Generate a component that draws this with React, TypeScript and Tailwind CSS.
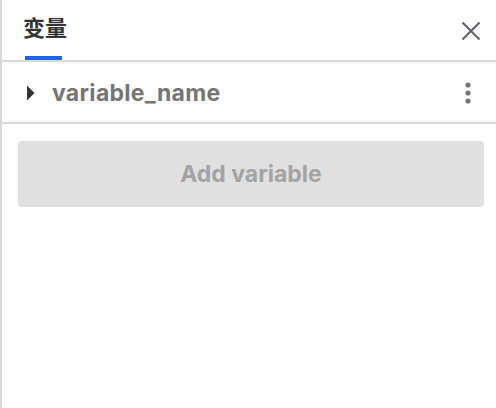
import React from "react";

export default function App() {
  return (
    <div
      className="w-[496px] h-[408px] bg-white border-l-2 border-[#d9d9d9] flex flex-col"
      style={{ fontFamily: "Inter, 'Noto Sans CJK SC', sans-serif" }}
    >
      <div className="h-[62px] shrink-0 border-b-2 border-[#d9d9d9] flex items-stretch justify-between pl-[21px] pr-[15px]">
        <div className="flex flex-col justify-between">
          <div className="pt-[17px] text-[22px] leading-[22px] font-bold text-[#333333]">变量</div>
          <div className="h-[4px] w-[37px] ml-[2px] bg-[#1a66e8]" />
        </div>
        <div className="flex items-start pt-[21px]">
          <svg width="20" height="20" viewBox="0 0 20 20" className="block">
            <path d="M1.5 1.5L18.5 18.5M18.5 1.5L1.5 18.5" stroke="#5f6068" strokeWidth="2" fill="none" />
          </svg>
        </div>
      </div>
      <div className="h-[62px] shrink-0 border-b-2 border-[#d9d9d9] flex items-center pt-[2px] pl-[25px] pr-[25px]">
        <svg width="8" height="16" viewBox="0 0 8 16" className="block shrink-0">
          <path d="M0 0.5L7.5 8L0 15.5Z" fill="#333333" />
        </svg>
        <div className="ml-[17px] text-[23px] leading-[28px] tracking-[0.3px] font-bold text-[#757575] flex-1">variable_name</div>
        <svg width="6" height="22" viewBox="0 0 6 22" className="block">
          <circle cx="3" cy="3" r="2.6" fill="#757575" />
          <circle cx="3" cy="11" r="2.6" fill="#757575" />
          <circle cx="3" cy="19" r="2.6" fill="#757575" />
        </svg>
      </div>
      <div className="mt-[17px] ml-[16px] mr-[12px]">
        <div className="h-[66px] rounded-[4px] bg-[#e0e0e0] flex items-center justify-center text-[23px] font-bold text-[#a3a3a3]">
          Add variable
        </div>
      </div>
    </div>
  );
}
